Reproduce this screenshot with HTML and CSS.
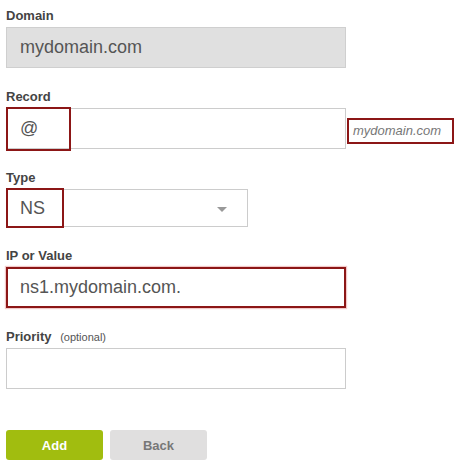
FILE: index.html
```html
<!DOCTYPE html>
<html>
<head>
<meta charset="utf-8">
<link rel="stylesheet" href="styles.css">
</head>
<body>
<form class="form">
  <div class="field">
    <label class="label">Domain</label>
    <input class="input input-disabled" type="text" value="mydomain.com" readonly>
  </div>
  <div class="field">
    <label class="label">Record</label>
    <div class="row">
      <div class="wrap">
        <input class="input" type="text" value="@">
        <span class="mark mark-record"></span>
      </div>
      <span class="hint">mydomain.com</span>
    </div>
  </div>
  <div class="field">
    <label class="label">Type</label>
    <div class="wrap wrap-select">
      <div class="select"><span>NS</span><span class="caret"></span></div>
      <span class="mark mark-type"></span>
    </div>
  </div>
  <div class="field">
    <label class="label">IP or Value</label>
    <input class="input input-error" type="text" value="ns1.mydomain.com.">
  </div>
  <div class="field">
    <label class="label">Priority <span class="optional">(optional)</span></label>
    <input class="input" type="text" value="">
  </div>
  <div class="actions">
    <button type="button" class="btn btn-primary">Add</button>
    <button type="button" class="btn btn-secondary">Back</button>
  </div>
</form>
</body>
</html>
```

FILE: styles.css
```css
* { box-sizing: border-box; }
html, body { margin: 0; padding: 0; background: #fff; }
body {
  font-family: "Liberation Sans", Arial, sans-serif;
  color: #555;
}
.form {
  padding: 8px 0 0 6px;
  width: 460px;
}
.field {
  margin-bottom: 21px;
}
.label {
  display: block;
  font-size: 13px;
  line-height: 16px;
  font-weight: bold;
  color: #444;
  margin-bottom: 3px;
}
.optional {
  font-weight: normal;
  font-size: 11px;
  color: #555;
  margin-left: 5px;
}
.input {
  display: block;
  width: 340px;
  height: 41px;
  border: 1px solid #ccc;
  background: #fff;
  padding: 0 0 0 13px;
  font-family: "Liberation Sans", Arial, sans-serif;
  font-size: 18px;
  color: #555;
  outline: none;
  margin: 0;
}
.input-disabled {
  background: #e0e0e0;
  border-color: #cfcfcf;
}
.input-error {
  margin-top: 1px;
  border: 2px solid #8c1616;
  padding-left: 12px;
  box-shadow: 0 0 1px 1px #f2c9c9;
}
.row {
  display: flex;
  align-items: center;
}
.wrap {
  position: relative;
}
.wrap-select {
  margin-top: 1px;
}
.hint {
  margin-left: 1px;
  margin-top: 4px;
  height: 26px;
  width: 107px;
  border: 2px solid #8c1616;
  padding-left: 4px;
  font-size: 13px;
  line-height: 22px;
  font-style: italic;
  color: #777;
}
.mark {
  position: absolute;
  left: 0;
  top: -1px;
  bottom: -2px;
  border: 2px solid #8c1616;
}
.mark-record { width: 65px; bottom: -2px; }
.mark-type { width: 58px; bottom: -1px; }
.select {
  width: 242px;
  height: 38px;
  border: 1px solid #ccc;
  background: #fff;
  display: flex;
  align-items: center;
  justify-content: space-between;
  padding: 0 20px 0 13px;
  font-size: 18px;
  color: #555;
}
.caret {
  width: 0;
  height: 0;
  border-left: 5px solid transparent;
  border-right: 5px solid transparent;
  border-top: 5px solid #999;
  margin-top: 2px;
}
.actions {
  display: flex;
  gap: 7px;
  padding-top: 20px;
}
.btn {
  width: 97px;
  height: 30px;
  border: none;
  border-radius: 3px;
  font-family: "Liberation Sans", Arial, sans-serif;
  font-size: 13px;
  font-weight: bold;
  padding: 0;
  cursor: pointer;
}
.btn-primary {
  background: #a1bd0f;
  color: #fff;
}
.btn-secondary {
  background: #e0dfdf;
  color: #777;
}
```
